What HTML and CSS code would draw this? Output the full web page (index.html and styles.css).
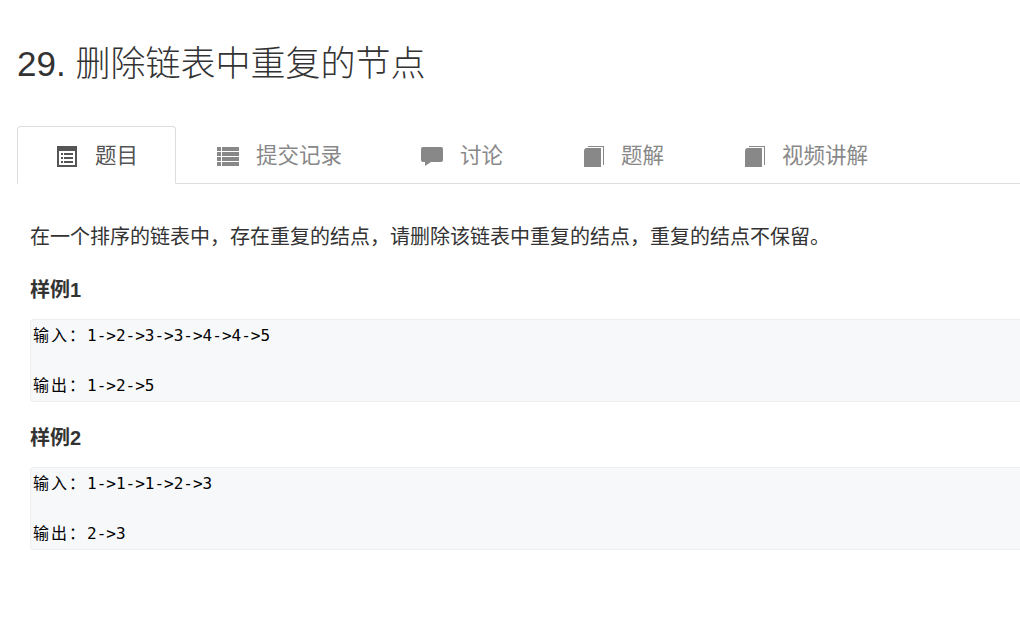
FILE: index.html
```html
<!DOCTYPE html>
<html lang="zh-CN">
<head>
    <meta charset="UTF-8">
    <title>29. 删除链表中重复的节点</title>
    <link rel="stylesheet" href="styles.css">
</head>
<body>
    <h1 class="title">29. 删除链表中重复的节点</h1>
    <ul class="tabs">
        <li class="tab active">
            <svg class="icon icon-table" viewBox="0 0 20 21"><path fill-rule="evenodd" d="M0 0H20V21H0ZM2 5V19H18V5ZM4 7H6V9H4ZM7 7H16V9H7ZM4 11H6V13H4ZM7 11H16V13H7ZM4 15H6V17H4ZM7 15H16V17H7Z"/></svg>
            <span>题目</span>
        </li>
        <li class="tab">
            <svg class="icon" viewBox="0 0 22 19"><path d="M0 0H4V4H0ZM5 0H22V4H5ZM0 5H4V9H0ZM5 5H22V9H5ZM0 10H4V14H0ZM5 10H22V14H5ZM0 15H4V19H0ZM5 15H22V19H5Z"/></svg>
            <span>提交记录</span>
        </li>
        <li class="tab">
            <svg class="icon" viewBox="0 0 22 19"><path d="M2 0H20Q22 0 22 2V13Q22 15 20 15H10L4 19V15H2Q0 15 0 13V2Q0 0 2 0Z"/></svg>
            <span>讨论</span>
        </li>
        <li class="tab">
            <svg class="icon icon-book" viewBox="0 0 22 21"><path d="M5 2H19V21H2V5Q2 2 5 2ZM6 0H22V19H21V1H6Z"/></svg>
            <span>题解</span>
        </li>
        <li class="tab">
            <svg class="icon icon-book" viewBox="0 0 22 21"><path d="M5 2H19V21H2V5Q2 2 5 2ZM6 0H22V19H21V1H6Z"/></svg>
            <span>视频讲解</span>
        </li>
    </ul>
    <div class="content">
        <p class="desc">在一个排序的链表中，存在重复的结点，请删除该链表中重复的结点，重复的结点不保留。</p>
        <h4 class="sample-title">样例1</h4>
        <pre class="sample"><span class="cn">输入：</span>1-&gt;2-&gt;3-&gt;3-&gt;4-&gt;4-&gt;5

<span class="cn">输出：</span>1-&gt;2-&gt;5</pre>
        <h4 class="sample-title">样例2</h4>
        <pre class="sample"><span class="cn">输入：</span>1-&gt;1-&gt;1-&gt;2-&gt;3

<span class="cn">输出：</span>2-&gt;3</pre>
    </div>
</body>
</html>
```

FILE: styles.css
```css
body {
    font-family: "Liberation Sans", "Noto Sans CJK SC", sans-serif;
    background-color: #fff;
    color: #333;
    margin: 0;
    overflow: hidden;
}
.title {
    margin: 0;
    padding: 44px 0 0 17px;
    height: 85px;
    box-sizing: border-box;
    font-size: 35px;
    line-height: 40px;
    font-weight: 300;
}
.tabs {
    list-style: none;
    margin: 41px 0 0 17px;
    padding: 0;
    display: flex;
    height: 58px;
    box-sizing: border-box;
    border-bottom: 1px solid #ddd;
}
.tab {
    height: 58px;
    padding: 0 38px 0 39px;
    box-sizing: border-box;
    display: flex;
    align-items: center;
    gap: 17px;
    font-size: 21.5px;
    color: #888;
    border: 1px solid transparent;
}
.tab span {
    margin-bottom: 4px;
}
.tab.active {
    padding-right: 37px;
    margin-right: 1px;
    color: #555;
    background-color: #fff;
    border-color: #ddd;
    border-bottom-color: #fff;
    border-radius: 4px 4px 0 0;
}
.icon {
    width: 22px;
    height: 19px;
    margin-top: 3px;
    fill: currentColor;
}
.icon-table {
    width: 20px;
    height: 21px;
    margin-right: 1px;
}
.icon-book {
    height: 21px;
}
.content {
    padding: 0 0 0 30px;
}
.desc {
    margin: 40px 0 0;
    font-size: 20px;
    line-height: 26px;
}
.sample-title {
    margin: 23px 0 0;
    font-size: 20px;
    line-height: 26px;
    font-weight: 700;
}
.desc + .sample-title {
    margin-top: 27px;
}
.sample {
    margin: 16px 0 0;
    padding: 3px 2px;
    height: 83px;
    box-sizing: border-box;
    background-color: #f7f8fa;
    border: 1px solid #eee;
    border-right: none;
    border-radius: 4px 0 0 4px;
    font-family: "DejaVu Sans Mono", "Noto Sans CJK SC", monospace;
    font-size: 16px;
    line-height: 25px;
    color: #000;
}
.cn {
    font-size: 16px;
    letter-spacing: 2px;
}
```
